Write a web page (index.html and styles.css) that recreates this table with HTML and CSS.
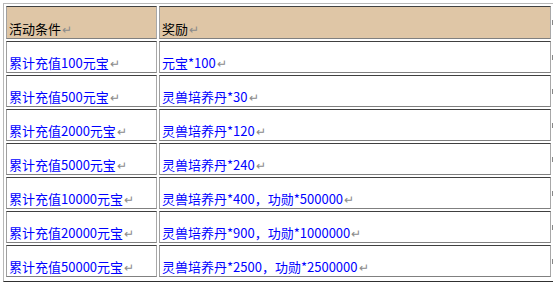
FILE: index.html
```html
<!DOCTYPE html>
<html lang="zh-CN">
<head>
    <link rel="stylesheet" href="styles.css">
    <meta charset="UTF-8">
    <title>充值奖励</title>
</head>
<body>
    <table class="rewards">
        <tr class="head">
            <td class="cond">活动条件<span class="mark">↵</span></td>
            <td class="prize">奖励<span class="mark">↵</span></td>
        </tr>
        <tr>
            <td class="cond">累计充值100元宝<span class="mark">↵</span></td>
            <td class="prize">元宝*100<span class="mark">↵</span></td>
        </tr>
        <tr>
            <td class="cond">累计充值500元宝<span class="mark">↵</span></td>
            <td class="prize">灵兽培养丹*30<span class="mark">↵</span></td>
        </tr>
        <tr>
            <td class="cond">累计充值2000元宝<span class="mark">↵</span></td>
            <td class="prize">灵兽培养丹*120<span class="mark">↵</span></td>
        </tr>
        <tr>
            <td class="cond">累计充值5000元宝<span class="mark">↵</span></td>
            <td class="prize">灵兽培养丹*240<span class="mark">↵</span></td>
        </tr>
        <tr>
            <td class="cond">累计充值10000元宝<span class="mark">↵</span></td>
            <td class="prize">灵兽培养丹*400，功勋*500000<span class="mark">↵</span></td>
        </tr>
        <tr>
            <td class="cond">累计充值20000元宝<span class="mark">↵</span></td>
            <td class="prize">灵兽培养丹*900，功勋*1000000<span class="mark">↵</span></td>
        </tr>
        <tr>
            <td class="cond">累计充值50000元宝<span class="mark">↵</span></td>
            <td class="prize">灵兽培养丹*2500，功勋*2500000<span class="mark">↵</span></td>
        </tr>
    </table>
</body>
</html>
```

FILE: styles.css
```css
body {
    margin: 3px;
    background: #fff;
    font-family: "Noto Sans CJK SC", sans-serif;
    font-size: 13px;
}
table.rewards {
    position: relative;
    border-collapse: separate;
    border-spacing: 2px;
    border: 1px solid;
    border-color: #b8b8b8 #303030 #303030 #b8b8b8;
    table-layout: fixed;
    width: 551px;
}
/* end-of-table marker under the bottom right corner */
table.rewards::after {
    content: "";
    position: absolute;
    right: -4px;
    bottom: -4px;
    width: 7px;
    border-top: 1px solid #000;
}
table.rewards td {
    box-sizing: border-box;
    position: relative;
    border: 1px solid;
    border-color: #404040 #a8a8a8 #808080 #a0a0a0;
    height: 32px;
    padding: 0 1px 1px 2px;
    vertical-align: bottom;
    line-height: 16px;
    color: #0000ff;
    white-space: nowrap;
}
table.rewards td.cond {
    width: 151px;
}
table.rewards tr.head td {
    height: 33px;
    background-color: #dfc6a6;
    color: #000;
}
/* end-of-row marker past the right edge */
table.rewards td.prize::after {
    content: "";
    position: absolute;
    right: -6px;
    top: 13px;
    width: 3px;
    height: 4px;
    border-left: 1px solid #888;
    border-bottom: 1px solid #888;
}
.mark {
    color: #8a8a8a;
    font-size: 12px;
    margin-left: 1px;
}
```
